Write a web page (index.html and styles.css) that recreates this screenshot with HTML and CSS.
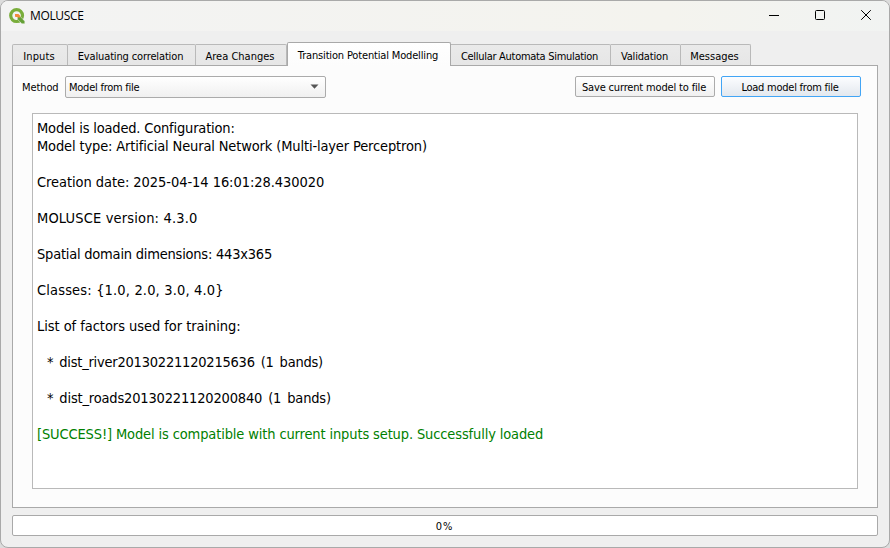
FILE: index.html
```html
<!DOCTYPE html>
<html lang="en">
<head>
<meta charset="utf-8">
<title>MOLUSCE</title>
<link rel="stylesheet" href="styles.css">
</head>
<body>
<div class="window">
  <header class="titlebar">
    <svg class="logo" width="16" height="16" viewBox="0 0 16 16">
      <circle cx="7.600" cy="7.600" r="5.900" fill="none" stroke="#79ad3b" stroke-width="3.200"/>
      <path d="M8.400 8.800l2.600-.6 4.800 5v2.600h-2.900L8.400 11.200z" fill="#64a036" stroke="#f3f3f0" stroke-width=".5"/>
      <path d="M6 6h3.400l1.800 1.800v1.800H9.400L8.800 9.200 6 8.800z" fill="#f28b3c"/>
    </svg>
    <h1>MOLUSCE</h1>
    <div class="controls">
      <svg width="12" height="12" viewBox="0 0 12 12"><path d="M1 6.500h10"/></svg>
      <svg width="12" height="12" viewBox="0 0 12 12"><rect x="1.500" y="1.500" width="9" height="9" rx="1"/></svg>
      <svg width="12" height="12" viewBox="0 0 12 12"><path d="M1.200 1.200l9.600 9.600M10.800 1.200l-9.600 9.600"/></svg>
    </div>
  </header>
  <main>
    <nav class="tabs">
      <div class="tab t1"><span>Inputs</span></div>
      <div class="tab t2"><span>Evaluating correlation</span></div>
      <div class="tab t3"><span>Area Changes</span></div>
      <div class="tab t4 active"><span>Transition Potential Modelling</span></div>
      <div class="tab t5"><span>Cellular Automata Simulation</span></div>
      <div class="tab t6"><span>Validation</span></div>
      <div class="tab t7"><span>Messages</span></div>
    </nav>
    <section class="pane">
      <div class="toolbar">
        <span class="label">Method</span>
        <div class="select"><span>Model from file</span><svg width="9" height="5" viewBox="0 0 9 5"><path d="M.5 .5h8L4.500 4.800z" fill="#555"/></svg></div>
        <div class="button save"><span>Save current model to file</span></div>
        <div class="button focus"><span>Load model from file</span></div>
      </div>
      <div class="log">
        <p class="l1">Model is loaded. Configuration:</p>
        <p class="l2">Model type: Artificial Neural Network (Multi-layer Perceptron)</p>
        <p class="gap l3">Creation date: 2025-04-14 16:01:28.430020</p>
        <p class="gap l4">MOLUSCE version: 4.3.0</p>
        <p class="gap l5">Spatial domain dimensions: 443x365</p>
        <p class="gap l6">Classes: {1.0, 2.0, 3.0, 4.0}</p>
        <p class="gap l7">List of factors used for training:</p>
        <p class="gap item l8">* dist_river20130221120215636 (1 bands)</p>
        <p class="gap item l9">* dist_roads20130221120200840 (1 bands)</p>
        <p class="gap success">[SUCCESS!] Model is compatible with current inputs setup. Successfully loaded</p>
      </div>
    </section>
    <div class="progress">0%</div>
  </main>
</div>
</body>
</html>
```
FILE: styles.css
```css
* { box-sizing: border-box; }
body {
  margin: 0;
  background: #dcdcdc;
  color: #000;
  font: 11px/14px "DejaVu Sans Condensed", "DejaVu Sans", sans-serif;
  font-stretch: condensed;
}
p, h1 { margin: 0; }
span, p { white-space: pre; }
.window {
  width: 890px;
  height: 548px;
  border: 1px solid #a9a9a9;
  border-radius: 8px;
  background: #efefef;
  overflow: hidden;
}
.titlebar {
  display: flex;
  align-items: center;
  height: 30px;
  padding: 0 17px 0 8px;
  background: linear-gradient(90deg, #f3f3f3, #f4f3ee 75%, #f1f3f2);
}
.logo { display: block; margin-top: -1px; }
h1 {
  margin-left: 5px;
  font: 12px/16px "Open Sans", sans-serif;
  letter-spacing: -.35px;
}
.controls { display: flex; gap: 34px; margin: -2px 0 0 auto; }
.controls svg { display: block; fill: none; stroke: #000; stroke-width: 1; }
main { padding: 11px; }
.tabs { display: flex; align-items: flex-end; height: 23px; }
.tab {
  height: 21px;
  padding: 5px 2px 0 0;
  border: 1px solid #b9b9b9;
  border-left-width: 0;
  border-bottom: 0;
  border-radius: 0 2px 0 0;
  background: linear-gradient(#eaeaea, #e6e6e6);
  text-align: center;
}
.t1 { width: 56px; border-left-width: 1px; border-radius: 2px 2px 0 0; letter-spacing: .15px; }
.t2 { width: 128px; letter-spacing: -.14px; }
.t3 { width: 91px; }
.t4 { width: 164px; letter-spacing: -.16px; }
.t5 { width: 160px; letter-spacing: -.29px; }
.t6 { width: 70px; letter-spacing: -.18px; }
.t7 { width: 70px; }
.tab.active {
  z-index: 1;
  height: 24px;
  margin-bottom: -1px;
  padding-top: 6px;
  border-left-width: 1px;
  border-color: #a9a9a9;
  border-radius: 2px 2px 0 0;
  background: linear-gradient(#fff, #fcfcfc);
}
.pane {
  height: 443px;
  padding: 10px 20px 0 9px;
  border: 1px solid #a9a9a9;
  background: #fcfcfc;
}
.toolbar { display: flex; height: 22px; }
.label { width: 43px; padding-top: 5px; letter-spacing: -.1px; }
.select {
  display: flex;
  align-items: center;
  justify-content: space-between;
  width: 261px;
  height: 22px;
  padding: 2px 6px 0 3px;
  border: 1px solid #ababab;
  border-radius: 2px;
  background: linear-gradient(#fff, #f0f0f0);
  letter-spacing: -.24px;
}
.select svg { margin-top: -3px; }
.button {
  width: 140px;
  height: 21px;
  padding: 4px 2px 0 0;
  border: 1px solid #ababab;
  border-radius: 2px;
  background: linear-gradient(#fff, #f0f0f0);
  text-align: center;
}
.save { margin: 0 6px 0 249px; letter-spacing: -.16px; }
.focus { margin-right: -4px; flex: none; border-color: #42a5f5; background: linear-gradient(#fcfdff, #e3e8ee); letter-spacing: -.24px; }
.log {
  width: 826px;
  height: 376px;
  margin: 15px 0 0 10px;
  padding: 5px 4px;
  border: 1px solid #b9b9b9;
  background: #fff;
  font-size: 14.500px;
  line-height: 18px;
}
.log .gap { margin-top: 18px; }
.item { padding-left: 10px; word-spacing: 2px; }
.l1 { letter-spacing: -.18px; }
.l2 { letter-spacing: -.14px; }
.l3 { letter-spacing: -.06px; }
.l4 { letter-spacing: .16px; }
.l5 { letter-spacing: -.22px; }
.l6 { letter-spacing: .16px; }
.l7 { letter-spacing: -.05px; }
.l8 { letter-spacing: -.22px; }
.l9 { letter-spacing: -.17px; }
.success { color: #008000; letter-spacing: -.13px; }
.progress {
  height: 21px;
  margin-top: 7px;
  padding: 4px 1px 0 0;
  border: 1px solid #a9a9a9;
  border-radius: 2px;
  background: #fff;
  text-align: center;
  letter-spacing: .8px;
}
```
